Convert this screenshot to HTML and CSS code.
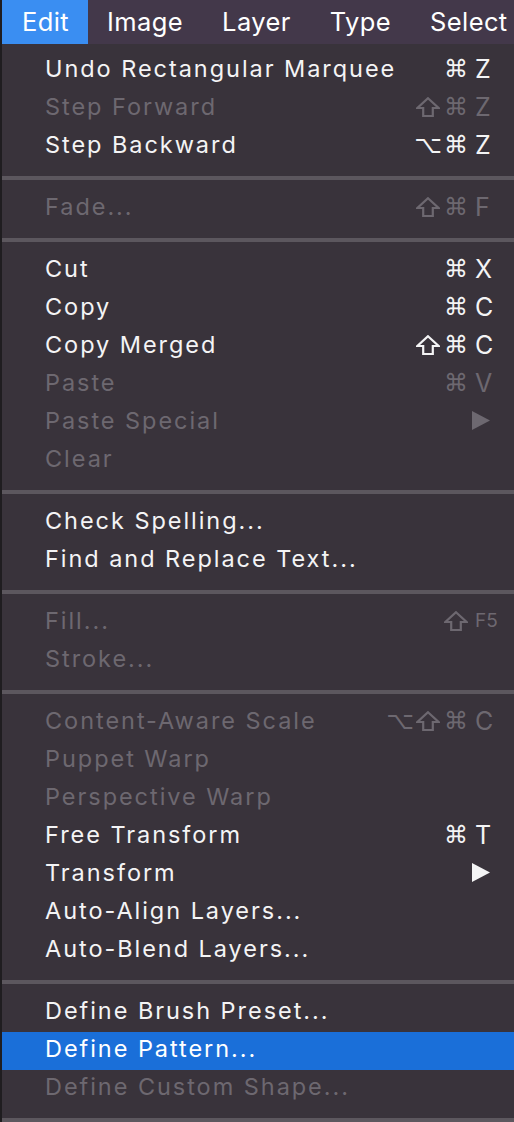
FILE: index.html
```html
<!DOCTYPE html>
<html>
<head>
<meta charset="utf-8">
<link rel="stylesheet" href="styles.css">
</head>
<body>
<div class="screen">
  <div class="strip"></div>
  <div class="main">
    <nav class="menubar">
      <span class="mb-item active">Edit</span>
      <span class="mb-item">Image</span>
      <span class="mb-item">Layer</span>
      <span class="mb-item">Type</span>
      <span class="mb-item">Select</span>
    </nav>
    <div class="menu">
      <div class="item"><span class="label">Undo Rectangular Marquee</span><span class="mods"><span class="m">⌘</span></span><span class="key">Z</span></div>
      <div class="item off"><span class="label">Step Forward</span><span class="mods"><span class="m"><svg class="shift" viewBox="0 0 24 20"><path d="M12 1.2 L22.6 11 H16.8 V19 H7.2 V11 H1.4 Z"/></svg></span><span class="m">⌘</span></span><span class="key">Z</span></div>
      <div class="item"><span class="label">Step Backward</span><span class="mods"><span class="m">⌥</span><span class="m">⌘</span></span><span class="key">Z</span></div>
      <div class="sep"></div>
      <div class="item off"><span class="label">Fade...</span><span class="mods"><span class="m"><svg class="shift" viewBox="0 0 24 20"><path d="M12 1.2 L22.6 11 H16.8 V19 H7.2 V11 H1.4 Z"/></svg></span><span class="m">⌘</span></span><span class="key">F</span></div>
      <div class="sep"></div>
      <div class="item"><span class="label">Cut</span><span class="mods"><span class="m">⌘</span></span><span class="key">X</span></div>
      <div class="item"><span class="label">Copy</span><span class="mods"><span class="m">⌘</span></span><span class="key">C</span></div>
      <div class="item"><span class="label">Copy Merged</span><span class="mods"><span class="m"><svg class="shift" viewBox="0 0 24 20"><path d="M12 1.2 L22.6 11 H16.8 V19 H7.2 V11 H1.4 Z"/></svg></span><span class="m">⌘</span></span><span class="key">C</span></div>
      <div class="item off"><span class="label">Paste</span><span class="mods"><span class="m">⌘</span></span><span class="key">V</span></div>
      <div class="item off"><span class="label">Paste Special</span><span class="mods"></span><span class="key"><svg class="arrow" viewBox="0 0 18 19"><polygon points="0,0 18,9.5 0,19"/></svg></span></div>
      <div class="item off"><span class="label">Clear</span><span class="mods"></span><span class="key"></span></div>
      <div class="sep"></div>
      <div class="item"><span class="label">Check Spelling...</span><span class="mods"></span><span class="key"></span></div>
      <div class="item"><span class="label">Find and Replace Text...</span><span class="mods"></span><span class="key"></span></div>
      <div class="sep"></div>
      <div class="item off"><span class="label">Fill...</span><span class="mods"><span class="m"><svg class="shift" viewBox="0 0 24 20"><path d="M12 1.2 L22.6 11 H16.8 V19 H7.2 V11 H1.4 Z"/></svg></span></span><span class="key small">F5</span></div>
      <div class="item off"><span class="label">Stroke...</span><span class="mods"></span><span class="key"></span></div>
      <div class="sep"></div>
      <div class="item off"><span class="label">Content-Aware Scale</span><span class="mods"><span class="m">⌥</span><span class="m"><svg class="shift" viewBox="0 0 24 20"><path d="M12 1.2 L22.6 11 H16.8 V19 H7.2 V11 H1.4 Z"/></svg></span><span class="m">⌘</span></span><span class="key">C</span></div>
      <div class="item off"><span class="label">Puppet Warp</span><span class="mods"></span><span class="key"></span></div>
      <div class="item off"><span class="label">Perspective Warp</span><span class="mods"></span><span class="key"></span></div>
      <div class="item"><span class="label">Free Transform</span><span class="mods"><span class="m">⌘</span></span><span class="key">T</span></div>
      <div class="item"><span class="label">Transform</span><span class="mods"></span><span class="key"><svg class="arrow" viewBox="0 0 18 19"><polygon points="0,0 18,9.5 0,19"/></svg></span></div>
      <div class="item"><span class="label">Auto-Align Layers...</span><span class="mods"></span><span class="key"></span></div>
      <div class="item"><span class="label">Auto-Blend Layers...</span><span class="mods"></span><span class="key"></span></div>
      <div class="sep"></div>
      <div class="item"><span class="label">Define Brush Preset...</span><span class="mods"></span><span class="key"></span></div>
      <div class="item hl"><span class="label">Define Pattern...</span><span class="mods"></span><span class="key"></span></div>
      <div class="item off"><span class="label">Define Custom Shape...</span><span class="mods"></span><span class="key"></span></div>
      <div class="sep"></div>
    </div>
  </div>
</div>
</body>
</html>
```
FILE: styles.css
```css
html, body {
  margin: 0;
  padding: 0;
  background: #1e1c1f;
}
body {
  width: 514px;
  height: 1122px;
  overflow: hidden;
  font-family: Inter, "Noto Sans", "DejaVu Sans", sans-serif;
}
.screen {
  display: flex;
  width: 514px;
  height: 1122px;
}
.strip {
  width: 2px;
  flex: none;
  background: #1f1d20;
}
.main {
  flex: 1;
  min-width: 0;
  overflow: hidden;
  display: flex;
  flex-direction: column;
  background: #39333b;
}
.menubar {
  height: 44px;
  display: flex;
  align-items: center;
  background: #43384a;
  color: #ffffff;
  font-size: 25.5px;
  letter-spacing: 0.4px;
  white-space: nowrap;
}
.mb-item {
  height: 44px;
  line-height: 43px;
  padding: 0 20px 0 19px;
  box-sizing: border-box;
  flex: none;
}
.mb-item.active {
  background: #3a8ef2;
  padding: 0 19px 0 20px;
}
.menu {
  padding-top: 8px;
  display: flex;
  flex-direction: column;
}
.item {
  height: 38px;
  box-sizing: border-box;
  padding-bottom: 5px;
  display: grid;
  grid-template-columns: minmax(0, 1fr) auto 39px;
  column-gap: 5px;
  align-items: center;
  padding-left: 43px;
  color: #f4f4f5;
  font-size: 23.5px;
  white-space: nowrap;
}
.label {
  letter-spacing: 1.95px;
}
.item.off {
  color: #6d6870;
}
.item.hl {
  background: #1a6fd9;
  color: #ffffff;
}
.mods {
  display: flex;
  justify-content: flex-end;
  align-items: center;
}
.m {
  width: 28px;
  height: 28px;
  display: flex;
  align-items: center;
  justify-content: center;
  font-family: "DejaVu Sans", sans-serif;
  font-size: 24px;
}
.shift {
  width: 24px;
  height: 20px;
  fill: none;
  stroke: currentColor;
  stroke-width: 2.2;
  stroke-linejoin: miter;
}
.key {
  font-size: 25px;
  display: flex;
  align-items: center;
}
.key.small {
  font-size: 19px;
}
.arrow {
  width: 18px;
  height: 19px;
  margin-left: -3px;
  fill: currentColor;
}
.sep {
  height: 24px;
  display: flex;
  align-items: center;
}
.sep::before {
  content: "";
  display: block;
  width: 100%;
  height: 4px;
  background: #5c575e;
}
```
